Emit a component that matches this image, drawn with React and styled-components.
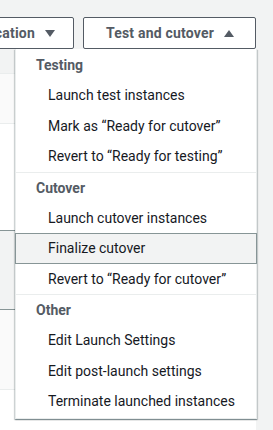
import React from "react";
import styled, { createGlobalStyle } from "styled-components";

const GlobalStyle = createGlobalStyle`
  html, body {
    margin: 0;
    padding: 0;
    background: #f2f3f3;
    overflow: hidden;
  }
  body {
    font-family: Roboto, "Liberation Sans", sans-serif;
    font-size: 14px;
    color: #16191f;
  }
`;

const Page = styled.div`
  width: 273px;
  height: 430px;
  overflow: hidden;
  background: #f2f3f3;
`;

const Toolbar = styled.div`
  display: flex;
  justify-content: flex-end;
  align-items: flex-end;
  gap: 9px;
  padding: 17px 17px 0 0;
  height: 32px;
`;

const MenuWrap = styled.div`
  position: relative;
  flex-shrink: 0;
`;

const Button = styled.button`
  display: flex;
  align-items: center;
  gap: 10px;
  height: 32px;
  box-sizing: border-box;
  padding: 0 18px 0 19px;
  border: 1px solid #545b64;
  border-radius: 2px;
  background: #fff;
  color: #545b64;
  font-family: inherit;
  font-size: 14px;
  font-weight: 700;
  letter-spacing: 0.2px;
  white-space: nowrap;
  flex-shrink: 0;
  width: ${(p) => p.$width || "auto"};
  justify-content: center;
`;

const Caret = ({ up }) => (
  <svg width="10" height="7" viewBox="0 0 10 7">
    <polygon
      points={up ? "0,7 10,7 5,0" : "0,0 10,0 5,7"}
      fill="#545b64"
    />
  </svg>
);

const Table = styled.div`
  width: 256px;
`;

const Row = styled.div`
  height: ${(p) => p.$h}px;
  background: ${(p) => p.$bg};
  border-bottom: 1px solid ${(p) => p.$line || "#eaeded"};
`;

const Dropdown = styled.ul`
  position: absolute;
  top: 100%;
  right: -1px;
  width: 242px;
  box-sizing: border-box;
  margin: 0;
  padding: 1px 0 1px;
  list-style: none;
  background: #fff;
  border: 1px solid #eaeded;
  border-top: none;
  box-shadow: 0 1px 1px 0 rgba(0, 28, 36, 0.3),
    1px 1px 1px 0 rgba(0, 28, 36, 0.15), -1px 1px 1px 0 rgba(0, 28, 36, 0.15);
  z-index: 5;
`;

const Group = styled.li`
  & + & {
    border-top: 1px solid #eaeded;
  }
`;

const GroupTitle = styled.div`
  height: 30px;
  line-height: 30px;
  padding-left: 20px;
  font-weight: 700;
  color: #545b64;
`;

const Item = styled.div`
  height: 30.5px;
  line-height: 30px;
  box-sizing: border-box;
  padding-left: 32px;
  color: #16191f;
  white-space: nowrap;
  ${(p) =>
    p.$active &&
    `
    background: #f2f3f3;
    border: 1px solid #879596;
    margin: 0 -1px;
    padding-left: 32px;
    line-height: 28px;
    position: relative;
  `}
`;

const groups = [
  {
    title: "Testing",
    items: [
      "Launch test instances",
      "Mark as \u201cReady for cutover\u201d",
      "Revert to \u201cReady for testing\u201d",
    ],
  },
  {
    title: "Cutover",
    items: [
      "Launch cutover instances",
      "Finalize cutover",
      "Revert to \u201cReady for cutover\u201d",
    ],
  },
  {
    title: "Other",
    items: [
      "Edit Launch Settings",
      "Edit post-launch settings",
      "Terminate launched instances",
    ],
  },
];

export default function App() {
  return (
    <Page>
      <GlobalStyle />
      <Toolbar>
        <Button>
          Replication <Caret />
        </Button>
        <MenuWrap>
          <Button $width="173px">
            Test and cutover <Caret up />
          </Button>
          <Dropdown>
            {groups.map((g) => (
              <Group key={g.title}>
                <GroupTitle>{g.title}</GroupTitle>
                {g.items.map((it) => (
                  <Item key={it} $active={it === "Finalize cutover"}>
                    {it}
                  </Item>
                ))}
              </Group>
            ))}
          </Dropdown>
        </MenuWrap>
      </Toolbar>
      <Table>
        <Row $h={24} $bg="#f2f3f3" />
        <Row $h={49} $bg="#fafafa" />
        <Row $h={106} $bg="#ffffff" $line="#879596" />
        <Row $h={78} $bg="#f2f3f3" $line="#879596" />
        <Row $h={79} $bg="#fafafa" />
        <Row $h={60} $bg="#ffffff" />
      </Table>
    </Page>
  );
}
